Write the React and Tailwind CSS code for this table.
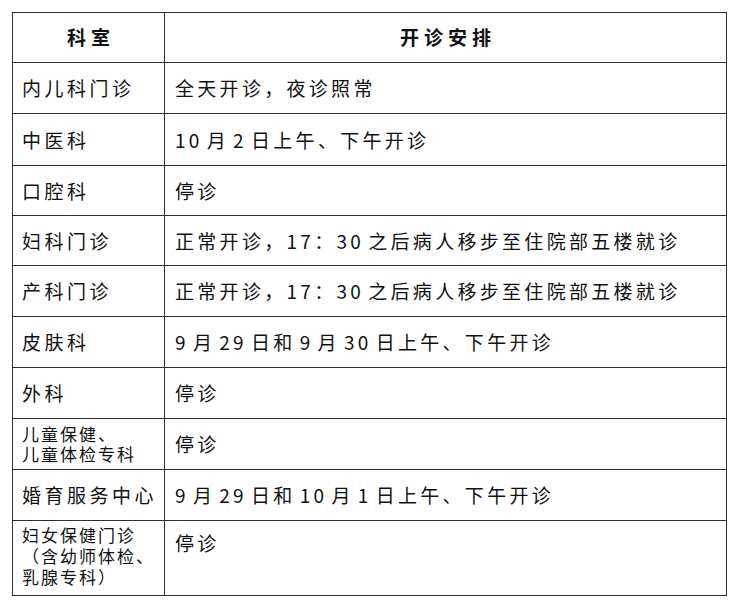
import React from "react";

const rows = [
  { h: "h-[51px]", left: ["内儿科门诊"], right: "全天开诊，夜诊照常" },
  { h: "h-[52px]", left: ["中医科"], right: "10 月 2 日上午、下午开诊" },
  { h: "h-[50px]", left: ["口腔科"], right: "停诊" },
  { h: "h-[50px]", left: ["妇科门诊"], right: "正常开诊，17：30 之后病人移步至住院部五楼就诊" },
  { h: "h-[51px]", left: ["产科门诊"], right: "正常开诊，17：30 之后病人移步至住院部五楼就诊" },
  { h: "h-[51px]", left: ["皮肤科"], right: "9 月 29 日和 9 月 30 日上午、下午开诊" },
  { h: "h-[51px]", left: ["外科"], right: "停诊" },
  { h: "h-[51px]", left: ["儿童保健、", "儿童体检专科"], right: "停诊", small: true },
  { h: "h-[51px]", left: ["婚育服务中心"], right: "9 月 29 日和 10 月 1 日上午、下午开诊" },
];

export default function App() {
  const font = { fontFamily: '"Noto Sans CJK SC", "Noto Sans", sans-serif' };
  return (
    <div className="bg-white w-[738px] h-[612px] pt-[12px] pl-[12px] text-[#111]" style={font}>
      <div className="w-[715px] border-t border-l border-[#2e2e2e]">
        <div className="grid grid-cols-[152px_1fr] h-[50px]">
          <div className="border-r border-b border-[#2e2e2e] flex items-center justify-center pl-[5px] font-bold text-[19px] tracking-[5px]">
            科室
          </div>
          <div className="border-r border-b border-[#2e2e2e] flex items-center justify-center pl-[5px] font-bold text-[19px] tracking-[5px]">
            开诊安排
          </div>
        </div>
        {rows.map((r, i) => (
          <div key={i} className={`grid grid-cols-[152px_1fr] ${r.h}`}>
            <div className="border-r border-b border-[#2e2e2e] flex flex-col justify-center pl-[9px] whitespace-nowrap">
              {r.small ? (
                <div className="text-[17px] leading-[20px] tracking-[2px]">
                  {r.left.map((l, j) => (
                    <div key={j}>{l}</div>
                  ))}
                </div>
              ) : (
                <div className="text-[19px] leading-[24px] tracking-[3.5px]">{r.left[0]}</div>
              )}
            </div>
            <div className="border-r border-b border-[#2e2e2e] flex items-center pl-[10px] whitespace-nowrap text-[19px] leading-[24px] tracking-[3.3px] [word-spacing:-3.5px]">
              {r.right}
            </div>
          </div>
        ))}
        <div className="grid grid-cols-[152px_1fr] h-[75px]">
          <div className="border-r border-b border-[#2e2e2e] pl-[9px] pt-[3px] whitespace-nowrap text-[17px] leading-[21px] tracking-[2px]">
            <div>妇女保健门诊</div>
            <div>（含幼师体检、</div>
            <div>乳腺专科）</div>
          </div>
          <div className="border-r border-b border-[#2e2e2e] pl-[10px] pt-[10px] whitespace-nowrap text-[19px] leading-[24px] tracking-[3.3px]">
            停诊
          </div>
        </div>
      </div>
    </div>
  );
}
